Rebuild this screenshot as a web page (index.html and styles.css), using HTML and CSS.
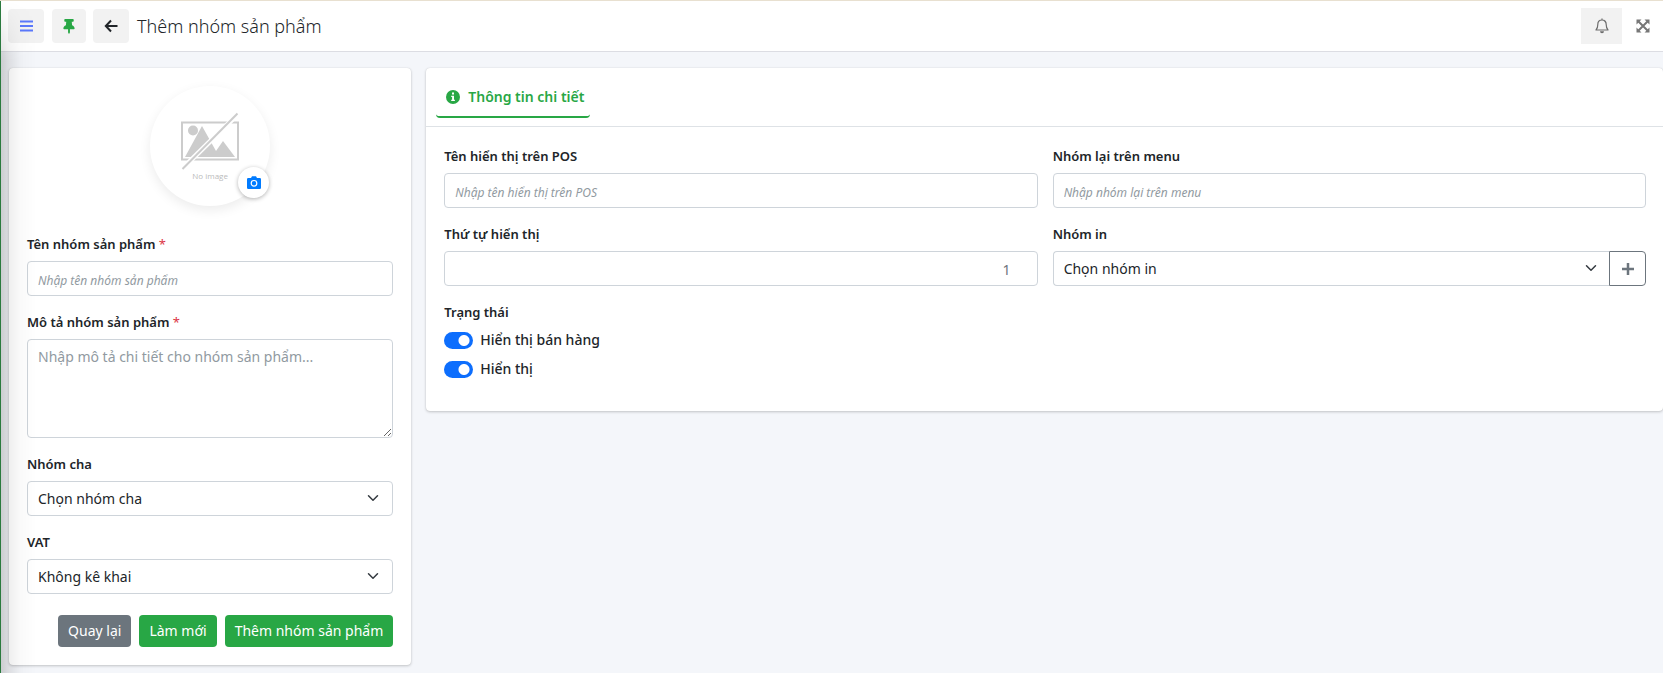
FILE: index.html
```html
<!DOCTYPE html>
<html lang="vi">
<head>
<meta charset="utf-8">
<title>Thêm nhóm sản phẩm</title>
<link rel="stylesheet" href="styles.css">
</head>
<body>
<div class="sidebar-edge"></div>
<header class="topbar">
  <button class="tool tool-menu" type="button" aria-label="Menu">
    <svg width="14" height="14" viewBox="0 0 14 14"><path d="M1 2.500h13M1 7h13M1 11.500h13" stroke="#5b78fb" stroke-width="2"/></svg>
  </button>
  <button class="tool tool-pin" type="button" aria-label="Ghim">
    <svg width="12" height="15" viewBox="0 0 384 512"><path fill="#28a745" d="M298 214.300 285.800 96H328c13.300 0 24-10.700 24-24V24c0-13.300-10.700-24-24-24H56C42.700 0 32 10.700 32 24v48c0 13.300 10.700 24 24 24h42.200L86 214.300C37.500 236.800 0 277.300 0 328c0 13.300 10.700 24 24 24h136v104c0 1.200.3 2.500.8 3.600l24 48c2.900 5.900 11.400 5.900 14.300 0l24-48c.6-1.100.8-2.300.8-3.600V352h136c13.300 0 24-10.700 24-24 .1-51.200-38-91.400-85.900-113.700z"/></svg>
  </button>
  <button class="tool tool-back" type="button" aria-label="Quay lại">
    <svg width="14" height="14" viewBox="0 0 14 14"><path d="M7 1.500 1.800 7 7 12.500M2 7h11.500" fill="none" stroke="#212529" stroke-width="2"/></svg>
  </button>
  <h1 class="title">Thêm nhóm sản phẩm</h1>
  <button class="bell" type="button" aria-label="Thông báo">
    <svg width="14" height="16" viewBox="0 0 14 16"><path d="M1 12c1.500-1.500 1.800-3 1.800-5.500C2.800 3.800 4.600 2 7 2s4.200 1.800 4.200 4.500c0 2.500.3 4 1.800 5.500zM7 .5V2" fill="none" stroke="#6c6c6c" stroke-width="1.200" stroke-linejoin="round"/><path d="M5 13.300h4a2 2 0 0 1-4 0z" fill="#6c6c6c"/></svg>
  </button>
  <button class="expand" type="button" aria-label="Toàn màn hình">
    <svg width="14" height="14" viewBox="0 0 14 14"><path d="M2 2l10 10M12 2 2 12" stroke="#777" stroke-width="2"/><path d="M.5.5h5l-5 5zM13.500.5v5l-5-5zM.5 13.500v-5l5 5zM13.500 13.500h-5l5-5z" fill="#777"/></svg>
  </button>
</header>
<main class="page">
  <form class="card side" id="group-form">
    <div class="avatar">
      <svg class="no-image" width="60" height="58" viewBox="0 0 60 58"><rect x="2" y="10.500" width="56" height="37" fill="none" stroke="#ccc" stroke-width="2"/><circle cx="13" cy="18.500" r="5" fill="#ccc"/><path d="M5 45 22 14l14 25 7-10 12 16z" fill="#ccc"/><path d="M3 56 58 2" stroke="#fff" stroke-width="5"/><path d="M2.500 57 57.500 1.500" stroke="#ccc" stroke-width="2"/></svg>
      <span class="avatar-text">No image</span>
      <button class="camera" type="button" aria-label="Chọn ảnh">
        <svg width="14" height="13" viewBox="0 0 14 13"><path fill="#007bff" d="M1.200 2H4l1-1.800h4L10 2h2.800A1.200 1.200 0 0 1 14 3.200v8.600a1.200 1.200 0 0 1-1.200 1.200H1.200A1.200 1.200 0 0 1 0 11.800V3.200A1.200 1.200 0 0 1 1.200 2z"/><circle cx="7" cy="7.300" r="2.800" fill="none" stroke="#fff" stroke-width="1.200"/></svg>
      </button>
    </div>
    <div class="field">
      <label for="name">Tên nhóm sản phẩm <span class="req">*</span></label>
      <input class="control" id="name" type="text" placeholder="Nhập tên nhóm sản phẩm">
    </div>
    <div class="field">
      <label for="desc">Mô tả nhóm sản phẩm <span class="req">*</span></label>
      <textarea class="control area" id="desc" placeholder="Nhập mô tả chi tiết cho nhóm sản phẩm..."></textarea>
    </div>
    <div class="field">
      <label for="parent">Nhóm cha</label>
      <div class="select-wrap">
        <select class="control" id="parent"><option>Chọn nhóm cha</option></select>
        <svg class="chevron" width="12" height="12" viewBox="0 0 16 16"><path d="m2 5 6 6 6-6" fill="none" stroke="#343a40" stroke-width="2" stroke-linecap="round" stroke-linejoin="round"/></svg>
      </div>
    </div>
    <div class="field">
      <label for="vat">VAT</label>
      <div class="select-wrap">
        <select class="control" id="vat"><option>Không kê khai</option></select>
        <svg class="chevron" width="12" height="12" viewBox="0 0 16 16"><path d="m2 5 6 6 6-6" fill="none" stroke="#343a40" stroke-width="2" stroke-linecap="round" stroke-linejoin="round"/></svg>
      </div>
    </div>
    <div class="actions">
      <button class="btn btn-grey" type="button">Quay lại</button>
      <button class="btn" type="reset">Làm mới</button>
      <button class="btn" type="submit">Thêm nhóm sản phẩm</button>
    </div>
  </form>
  <section class="card detail">
    <nav class="tabs">
      <a class="tab" href="#detail">
        <svg width="14" height="14" viewBox="0 0 14 14"><circle cx="7" cy="7" r="7" fill="#28a745"/><path d="M6 2.500h2v2H6zM5.200 5.700H8v4h.9V11H5.200V9.700h.9V7h-.9z" fill="#fff"/></svg>
        Thông tin chi tiết
      </a>
    </nav>
    <div class="grid" id="detail">
      <div class="field">
        <label for="pos">Tên hiển thị trên POS</label>
        <input class="control" id="pos" type="text" placeholder="Nhập tên hiển thị trên POS">
      </div>
      <div class="field">
        <label for="menu">Nhóm lại trên menu</label>
        <input class="control" id="menu" type="text" placeholder="Nhập nhóm lại trên menu">
      </div>
      <div class="field">
        <label for="order">Thứ tự hiển thị</label>
        <input class="control number" id="order" type="number" value="1">
      </div>
      <div class="field">
        <label for="print">Nhóm in</label>
        <div class="group">
          <div class="select-wrap">
            <select class="control" id="print"><option>Chọn nhóm in</option></select>
            <svg class="chevron" width="12" height="12" viewBox="0 0 16 16"><path d="m2 5 6 6 6-6" fill="none" stroke="#343a40" stroke-width="2" stroke-linecap="round" stroke-linejoin="round"/></svg>
          </div>
          <button class="add" type="button" aria-label="Thêm nhóm in">
            <svg width="12" height="12" viewBox="0 0 12 12"><path d="M6 0v12M0 6h12" stroke="#6c757d" stroke-width="2.500"/></svg>
          </button>
        </div>
      </div>
      <fieldset class="status">
        <legend>Trạng thái</legend>
        <label class="check"><input class="switch" type="checkbox" checked>Hiển thị bán hàng</label>
        <label class="check"><input class="switch" type="checkbox" checked>Hiển thị</label>
      </fieldset>
    </div>
  </section>
</main>
</body>
</html>
```
FILE: styles.css
```css
* { box-sizing: border-box; }
body {
  margin: 0;
  background: #f4f6fa;
  color: #212529;
  font: 14px/22px "Segoe UI", "Noto Sans", sans-serif;
}
button, input, select, textarea { font: inherit; color: inherit; }
button { cursor: pointer; padding: 0; border: 0; }
svg { display: block; }

/* Edge of the collapsed sidebar with the shade it casts on the page */
.sidebar-edge {
  position: fixed;
  inset: 1px auto 0 0;
  width: 37px;
  border-left: 1px solid #2b7a3f;
  pointer-events: none;
  z-index: 2;
}
.sidebar-edge::after {
  content: "";
  display: block;
  height: 100%;
  background: linear-gradient(to right, rgba(0, 0, 0, .12), rgba(0, 0, 0, .06) 9px, rgba(0, 0, 0, .02) 20px, transparent);
  mask-image: linear-gradient(to bottom, transparent, #000 60px);
}

.topbar {
  display: flex;
  align-items: center;
  height: 52px;
  padding: 0 13px 0 8px;
  background: #fff;
  border-top: 1px solid #e8e0d0;
  border-bottom: 1px solid #dcdde3;
}
.tool, .bell {
  display: grid;
  place-items: center;
  height: 34px;
  background: #f2f2f2;
  border-radius: 4px;
}
.tool-menu { width: 36px; margin-right: 8px; }
.tool-pin { width: 34px; margin-right: 7px; }
.tool-back { width: 36px; margin-right: 8px; }
.title { flex: 1; margin: 0; font-size: 18px; font-weight: 300; line-height: 28px; }
.bell { width: 41px; height: 36px; margin-right: 14px; border-radius: 0; }
.expand { background: none; }

.page {
  display: grid;
  grid-template-columns: repeat(4, 1fr);
  gap: 15px;
  align-items: start;
  padding: 16px 0 8px 9px;
  background: linear-gradient(to right, rgba(0, 0, 0, .05), transparent 24px);
}
.card {
  background: #fff;
  border-radius: 4px;
  box-shadow: 0 0 1px rgba(0, 0, 0, .15), 0 1px 3px rgba(0, 0, 0, .2);
}
.side { padding: 18px; }
.detail { grid-column: span 3; }

.avatar {
  position: relative;
  display: flex;
  flex-direction: column;
  align-items: center;
  width: 120px;
  height: 120px;
  margin: 0 auto 27px;
  padding-top: 26px;
  border-radius: 50%;
  box-shadow: 0 4px 12px rgba(0, 0, 0, .08);
}
.avatar-text { font: 8px/12px "Open Sans", sans-serif; color: #bbb; }
.camera {
  position: absolute;
  right: 1px;
  bottom: 8px;
  display: grid;
  place-items: center;
  width: 31px;
  height: 31px;
  border-radius: 50%;
  background: #fff;
  box-shadow: 0 1px 4px rgba(0, 0, 0, .3);
}

.field { margin-bottom: 15px; }
.field > label, legend { display: block; margin-bottom: 6px; padding: 0; font-size: 13px; font-weight: 600; }
.req { color: #dc3545; font-weight: 400; }
.control {
  display: block;
  width: 100%;
  height: 35px;
  padding: 5px 10px 4px;
  border: 1px solid #ced4da;
  border-radius: 4px;
  background: #fff;
}
.control::placeholder { color: #919aa1; }
input.control::placeholder { font-size: 12px; font-style: italic; }
.area { height: 99px; padding-top: 6px; resize: vertical; }
.number { padding-right: 26px; text-align: right; color: #6c757d; appearance: textfield; }
.number::-webkit-inner-spin-button { display: none; }
.select-wrap { position: relative; flex: 1; }
select.control { appearance: none; }
.chevron { position: absolute; right: 14px; top: 11px; pointer-events: none; }
.group .chevron { right: 12px; }

.actions { display: flex; justify-content: flex-end; gap: 8px; margin-top: 21px; }
.btn {
  height: 32px;
  padding: 0 10px;
  border-radius: 4px;
  background: #28a745;
  color: #fff;
}
.btn-grey { background: #6c757d; }

.tabs { display: flex; padding: 10px 10px 8px; border-bottom: 1px solid #dee2e6; }
.tab {
  display: flex;
  align-items: center;
  gap: 8px;
  height: 40px;
  padding: 0 6px 0 10px;
  border-bottom: 2px solid #28a745;
  border-radius: 4px;
  color: #28a745;
  font-weight: 600;
  text-decoration: none;
}
.grid { display: grid; grid-template-columns: 1fr 1fr; column-gap: 15px; padding: 18px 17px 24px 18px; }
.group { display: flex; }
.group .control { border-radius: 4px 0 0 4px; border-right: 0; }
.add {
  display: grid;
  place-items: center;
  width: 37px;
  border: 1px solid #6c757d;
  border-radius: 0 4px 4px 0;
  background: #fff;
}
.status { margin: 0; padding: 0; border: 0; }
.check { display: flex; align-items: center; gap: 7px; height: 22px; margin-bottom: 7px; font-weight: 500; }
.switch {
  appearance: none;
  width: 29px;
  height: 17px;
  margin: 0;
  border-radius: 9px;
  background: radial-gradient(circle at 20px 50%, #fff 5px, transparent 6px) #0d6efd;
}
```
